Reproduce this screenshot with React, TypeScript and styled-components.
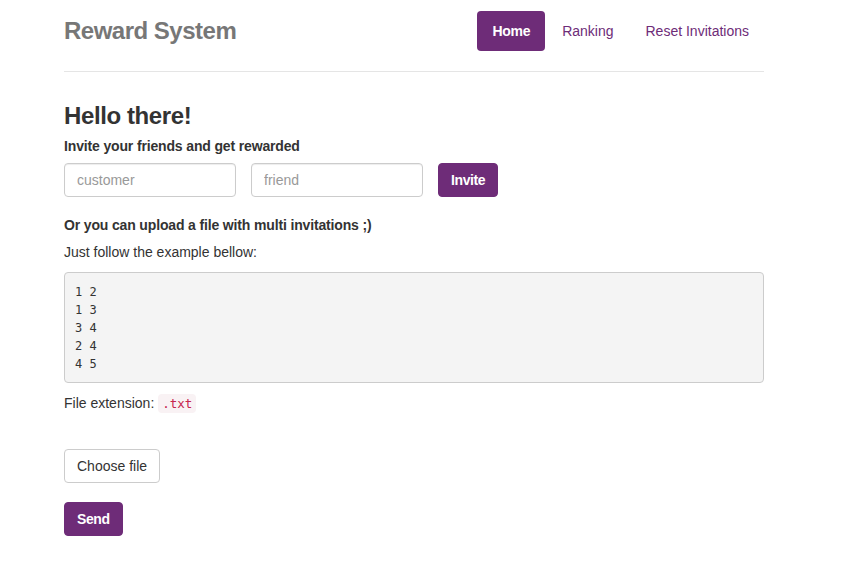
import React from 'react'
import styled, { createGlobalStyle } from 'styled-components'

const purple = '#6e2c78'

const GlobalStyle = createGlobalStyle`
  body {
    margin: 0;
    background: #fff;
    font-family: "Liberation Sans", Arial, sans-serif;
    font-size: 14px;
    line-height: 20px;
    color: #333;
  }
`

const Page = styled.div`
  width: 700px;
  margin-left: 64px;
  padding-top: 11px;
`

const Header = styled.header`
  display: flex;
  justify-content: space-between;
  align-items: center;
  padding-bottom: 20px;
  border-bottom: 1px solid #e5e5e5;
`

const Brand = styled.h3`
  margin: 0;
  font-size: 24px;
  line-height: 40px;
  font-weight: bold;
  letter-spacing: -0.5px;
  color: #777;
`

const Nav = styled.nav`
  display: flex;
  gap: 2px;
`

const NavPill = styled.a<{ $active?: boolean }>`
  display: block;
  padding: 10px 15px;
  border-radius: 4px;
  font-size: 14px;
  line-height: 20px;
  text-decoration: none;
  cursor: pointer;
  color: ${p => (p.$active ? '#fff' : purple)};
  background: ${p => (p.$active ? purple : 'transparent')};
  font-weight: ${p => (p.$active ? 'bold' : 'normal')};
  letter-spacing: ${p => (p.$active ? '-0.3px' : '0')};
`

const Main = styled.main`
  padding-top: 30px;
`

const Title = styled.h1`
  margin: 0 0 6px;
  font-size: 24px;
  line-height: 28px;
  font-weight: bold;
  letter-spacing: -0.4px;
  color: #333;
`

const Label = styled.p<{ $bold?: boolean }>`
  margin: 0;
  font-weight: ${p => (p.$bold ? 'bold' : 'normal')};
  letter-spacing: ${p => (p.$bold ? '-0.15px' : '0')};
`

const InviteRow = styled.form`
  display: flex;
  gap: 15px;
  margin: 7px 0 18px;
`

const TextInput = styled.input`
  box-sizing: border-box;
  width: 172px;
  height: 34px;
  padding: 6px 12px;
  border: 1px solid #ccc;
  border-radius: 4px;
  font-family: inherit;
  font-size: 14px;
  color: #555;
  box-shadow: inset 0 1px 1px rgba(0, 0, 0, 0.075);
  &::placeholder {
    color: #999;
  }
`

const PrimaryButton = styled.button`
  box-sizing: border-box;
  height: 34px;
  padding: 6px 12px;
  border: 1px solid ${purple};
  border-radius: 4px;
  background: ${purple};
  color: #fff;
  font-family: inherit;
  font-size: 14px;
  font-weight: bold;
  letter-spacing: -0.4px;
  cursor: pointer;
`

const Spaced = styled.div`
  margin-top: 7px;
`

const Example = styled.pre`
  box-sizing: border-box;
  margin: 10px 0 10px;
  padding: 10px 10px 9px;
  height: 111px;
  background: #f4f4f4;
  border: 1px solid #ccc;
  border-radius: 4px;
  font-family: "DejaVu Sans Mono", "Liberation Mono", monospace;
  font-size: 12px;
  line-height: 18px;
  color: #333;
`

const Code = styled.code`
  padding: 2px 4px;
  font-family: "DejaVu Sans Mono", "Liberation Mono", monospace;
  font-size: 12.5px;
  color: #c7254e;
  background: #f9f2f4;
  border-radius: 4px;
`

const FileButton = styled.label`
  display: inline-flex;
  align-items: center;
  box-sizing: border-box;
  height: 34px;
  margin-top: 35px;
  padding: 6px 12px;
  border: 1px solid #ccc;
  border-radius: 4px;
  background: #fff;
  color: #333;
  cursor: pointer;
`

const HiddenFile = styled.input`
  display: none;
`

const SendRow = styled.div`
  margin-top: 19px;
`

export default function App() {
  const lines = ['1 2', '1 3', '3 4', '2 4', '4 5']
  return (
    <>
      <GlobalStyle />
      <Page>
        <Header>
          <Brand>Reward System</Brand>
          <Nav>
            <NavPill $active>Home</NavPill>
            <NavPill>Ranking</NavPill>
            <NavPill>Reset Invitations</NavPill>
          </Nav>
        </Header>
        <Main>
          <Title>Hello there!</Title>
          <Label $bold>Invite your friends and get rewarded</Label>
          <InviteRow onSubmit={e => e.preventDefault()}>
            <TextInput placeholder="customer" />
            <TextInput placeholder="friend" />
            <PrimaryButton type="submit">Invite</PrimaryButton>
          </InviteRow>
          <Label $bold>Or you can upload a file with multi invitations ;)</Label>
          <Spaced>
            <Label>Just follow the example bellow:</Label>
          </Spaced>
          <Example>{lines.join('\n')}</Example>
          <Label>
            File extension: <Code>.txt</Code>
          </Label>
          <FileButton>
            Choose file
            <HiddenFile type="file" />
          </FileButton>
          <SendRow>
            <PrimaryButton type="button">Send</PrimaryButton>
          </SendRow>
        </Main>
      </Page>
    </>
  )
}
